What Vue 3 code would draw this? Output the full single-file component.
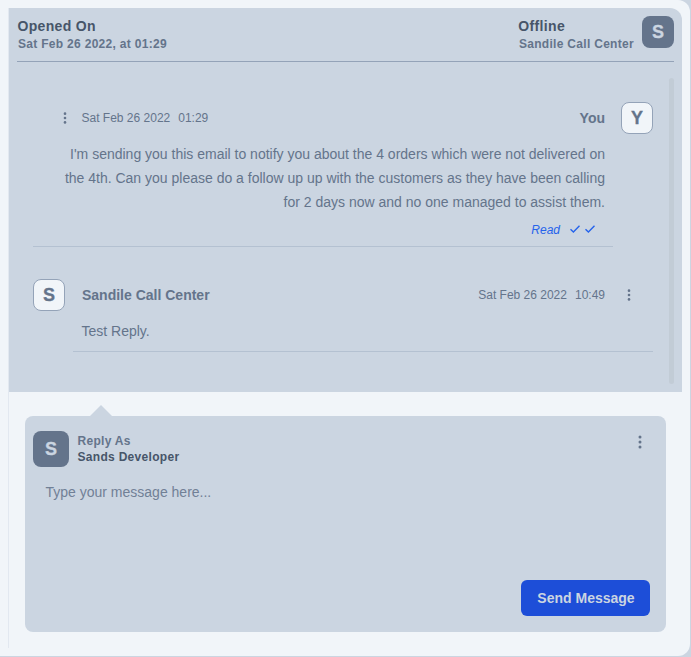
<script setup>
import { ref } from 'vue'

const message = ref('')
</script>

<template>
  <main class="shell">
    <div class="chat">
      <section class="conversation">
        <header class="top">
          <div class="opened">
            <h2 class="title">Opened On</h2>
            <p class="sub">Sat Feb 26 2022, at 01:29</p>
          </div>
          <div class="contact">
            <div>
              <h2 class="title">Offline</h2>
              <p class="sub">Sandile Call Center</p>
            </div>
            <span class="avatar dark">S</span>
          </div>
        </header>

        <div class="scroller">
          <div class="messages">
            <article class="message own">
              <div class="row">
                <svg class="dots" viewBox="0 0 16 16"><circle cx="8" cy="3" r="1.5" /><circle cx="8" cy="8" r="1.5" /><circle cx="8" cy="13" r="1.5" /></svg>
                <span class="date">Sat Feb 26 2022</span><span class="time">01:29</span>
                <strong class="name">You</strong>
                <span class="avatar light">Y</span>
              </div>
              <p class="text">I'm sending you this email to notify you about the 4 orders which were not delivered on the 4th. Can you please do a follow up up with the customers as they have been calling for 2 days now and no one managed to assist them.</p>
              <div class="status">
                <em>Read</em>
                <svg class="check" viewBox="0 0 12 12"><path d="M1.5 6.2 4.4 9 10.5 2.8" /></svg>
                <svg class="check" viewBox="0 0 12 12"><path d="M1.5 6.2 4.4 9 10.5 2.8" /></svg>
              </div>
            </article>
            <article class="message reply">
              <div class="row">
                <span class="avatar light">S</span>
                <strong class="name">Sandile Call Center</strong>
                <span class="date">Sat Feb 26 2022</span><span class="time">10:49</span>
                <svg class="dots" viewBox="0 0 16 16"><circle cx="8" cy="3" r="1.5" /><circle cx="8" cy="8" r="1.5" /><circle cx="8" cy="13" r="1.5" /></svg>
              </div>
              <p class="text">Test Reply.</p>
            </article>
          </div>
          <div class="track"></div>
        </div>
      </section>

      <form class="composer" @submit.prevent>
        <div class="composer-head">
          <span class="avatar dark large">S</span>
          <div class="author">
            <p class="as">Reply As</p>
            <p class="who">Sands Developer</p>
          </div>
          <svg class="dots" viewBox="0 0 16 16"><circle cx="8" cy="3" r="1.5" /><circle cx="8" cy="8" r="1.5" /><circle cx="8" cy="13" r="1.5" /></svg>
        </div>
        <textarea v-model="message" class="field" placeholder="Type your message here..."></textarea>
        <button class="send" type="submit">Send Message</button>
      </form>
    </div>
  </main>
</template>

<style>
body {
  background: #cbd5e1;
}
</style>

<style scoped>
* {
  box-sizing: border-box;
  margin: 0;
}
.shell {
  width: 690px;
  height: 656px;
  padding: 8px;
  background: #f1f5f9;
  border-radius: 0 12px 12px 0;
  font-family: "Liberation Sans", Arial, sans-serif;
  font-size: 14px;
  color: #64748b;
}
.chat {
  height: 640px;
  border-left: 1px solid #e2e8f0;
}
.conversation {
  display: flex;
  flex-direction: column;
  height: 384px;
  padding: 8px;
  background: #cbd5e1;
  border-radius: 0 12px 0 0;
}
.top {
  display: flex;
  justify-content: space-between;
  height: 46px;
  border-bottom: 1px solid #94a3b8;
}
.contact {
  display: flex;
  gap: 8px;
}
.title {
  padding-left: 0.4px;
  font-size: 14px;
  line-height: 20px;
  letter-spacing: 0.35px;
  color: #475569;
}
.sub {
  padding: 1px 0 0 1px;
  font-size: 12px;
  font-weight: 700;
  line-height: 14px;
  letter-spacing: 0.3px;
}
.avatar {
  display: flex;
  flex: none;
  align-items: center;
  justify-content: center;
  width: 32px;
  height: 32px;
  border-radius: 8px;
  font-size: 18px;
  font-weight: 700;
  -webkit-text-stroke: 0.3px currentColor;
}
.dark {
  background: #64748b;
  color: #cbd5e1;
}
.light {
  background: #f1f5f9;
  border: 1px solid #94a3b8;
}
.large {
  width: 36px;
  height: 36px;
}
.scroller {
  display: flex;
  justify-content: space-between;
  margin-top: 16px;
  height: 306px;
}
.messages {
  width: 636px;
  padding: 24px 0 0 16px;
}
.track {
  width: 5px;
  background: #c2ccd6;
  border-radius: 3px;
}
.row {
  display: flex;
  align-items: center;
  height: 32px;
}
.dots {
  flex: none;
  width: 14px;
  height: 14px;
  fill: #64748b;
}
.date,
.time {
  font-size: 12px;
}
.time {
  margin-left: 8px;
}
.name {
  font-size: 14px;
}
.own {
  height: 145px;
  width: 580px;
  border-bottom: 1px solid #b4c1d1;
}
.own .row {
  width: 620px;
  padding-left: 25px;
}
.own .date {
  margin-left: 9.5px;
}
.own .name {
  margin-left: auto;
  margin-right: 16px;
}
.text {
  line-height: 24px;
}
.own .text {
  width: 572px;
  padding: 8px 0 0 20px;
  text-align: right;
}
.status {
  display: flex;
  align-items: center;
  justify-content: flex-end;
  height: 16px;
  margin-top: 8px;
  padding-right: 17px;
  font-size: 12px;
  color: #2563eb;
}
.status em {
  margin-right: 9px;
}
.check {
  width: 12px;
  height: 12px;
  margin: 0 3px 2px 0;
  fill: none;
  stroke: #2563eb;
  stroke-width: 1.4;
}
.check:last-child {
  margin-right: 0;
}
.reply {
  padding-top: 32px;
}
.reply .name {
  margin-left: 17px;
  margin-right: auto;
}
.reply .dots {
  margin: 0 17px 0 17px;
}
.reply .text {
  margin-left: 40px;
  padding: 8px 0 8px 8.5px;
  border-bottom: 1px solid #b4c1d1;
}
.composer {
  position: relative;
  display: flex;
  flex-direction: column;
  height: 216px;
  margin: 24px 16px 0;
  padding: 15px 16px 16px 8px;
  background: #cbd5e1;
  border-radius: 8px;
}
.composer::before {
  content: "";
  position: absolute;
  top: -11px;
  left: 65px;
  width: 22px;
  height: 11px;
  background: #cbd5e1;
  clip-path: polygon(50% 0, 100% 100%, 0 100%);
}
.composer-head {
  display: flex;
  height: 36px;
}
.author {
  flex: 1;
  padding: 2px 0 0 8.5px;
  font-size: 12px;
  font-weight: 700;
  line-height: 16px;
  letter-spacing: 0.3px;
}
.who {
  color: #475569;
}
.composer-head .dots {
  width: 16px;
  height: 16px;
  margin: 3px 2px 0 0;
}
.field {
  flex: 1;
  margin-top: 13px;
  padding: 4px 12.5px;
  border: 0;
  outline: 0;
  resize: none;
  background: transparent;
  font: inherit;
  line-height: 16px;
}
.field::placeholder {
  color: #718096;
  opacity: 1;
}
.send {
  align-self: flex-end;
  width: 129px;
  height: 36px;
  padding: 0 0 0 1px;
  border: 0;
  border-radius: 6px;
  background: #1d4ed8;
  color: #cbd5e1;
  font: 700 14px "Liberation Sans", Arial, sans-serif;
}
</style>
